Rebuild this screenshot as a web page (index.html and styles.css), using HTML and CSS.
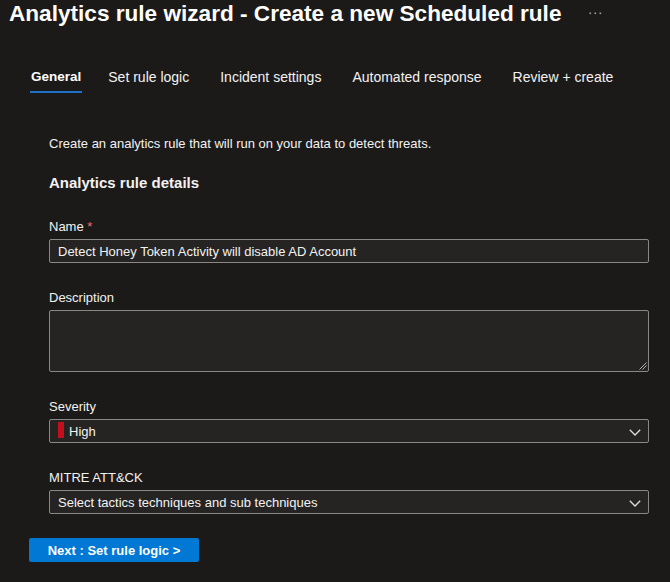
FILE: index.html
```html
<!DOCTYPE html>
<html lang="en">
<head>
<meta charset="utf-8">
<title>Analytics rule wizard</title>
<link rel="stylesheet" href="styles.css">
</head>
<body>
<header class="header">
  <h1 class="title">Analytics rule wizard - Create a new Scheduled rule</h1>
  <svg class="more" width="13" height="3" viewBox="0 0 13 3" aria-label="More">
    <rect x="0.5" y="0.5" width="1.6" height="1.6" fill="#a19f9d"/>
    <rect x="5.5" y="0.5" width="1.6" height="1.6" fill="#a19f9d"/>
    <rect x="10.5" y="0.5" width="1.6" height="1.6" fill="#a19f9d"/>
  </svg>
</header>

<nav class="tabs">
  <span class="tab active">General</span>
  <span class="tab">Set rule logic</span>
  <span class="tab">Incident settings</span>
  <span class="tab">Automated response</span>
  <span class="tab">Review + create</span>
</nav>

<p class="intro">Create an analytics rule that will run on your data to detect threats.</p>

<section class="form">
  <h2 class="section-title">Analytics rule details</h2>

  <div class="field first">
    <div class="label">Name <span class="req">*</span></div>
    <div class="box">Detect Honey Token Activity will disable AD Account</div>
  </div>

  <div class="field">
    <div class="label">Description</div>
    <div class="box area">
      <svg class="resizer" width="8" height="8" viewBox="0 0 8 8">
        <line x1="7.5" y1="0.5" x2="0.5" y2="7.5" stroke="#b3b0ad" stroke-width="1"/>
        <line x1="7.5" y1="3.5" x2="3.5" y2="7.5" stroke="#b3b0ad" stroke-width="1"/>
      </svg>
    </div>
  </div>

  <div class="field">
    <div class="label">Severity</div>
    <div class="box select">
      <span class="sev-bar"></span>
      <span class="value">High</span>
      <svg class="chevron" width="12" height="7" viewBox="0 0 12 7">
        <polyline points="0.8,0.8 6,6 11.2,0.8" fill="none" stroke="#e1dfdd" stroke-width="1.3"/>
      </svg>
    </div>
  </div>

  <div class="field">
    <div class="label">MITRE ATT&amp;CK</div>
    <div class="box select">
      <span class="value">Select tactics techniques and sub techniques</span>
      <svg class="chevron" width="12" height="7" viewBox="0 0 12 7">
        <polyline points="0.8,0.8 6,6 11.2,0.8" fill="none" stroke="#e1dfdd" stroke-width="1.3"/>
      </svg>
    </div>
  </div>
</section>

<footer class="footer">
  <button class="primary" type="button">Next : Set rule logic &gt;</button>
</footer>
</body>
</html>
```

FILE: styles.css
```css
html, body {
  margin: 0;
  padding: 0;
}

body {
  background: #1b1a19;
  color: #f3f2f1;
  font-family: "Liberation Sans", Arial, sans-serif;
  font-size: 13px;
  min-height: 100vh;
}

.header {
  display: flex;
  align-items: flex-start;
  padding-left: 9px;
}

.title {
  margin: 0;
  font-size: 22.6px;
  line-height: 28px;
  font-weight: 700;
  color: #ffffff;
  white-space: nowrap;
}

.more {
  margin-left: 28px;
  margin-top: 12px;
  flex: none;
}

.tabs {
  display: flex;
  margin-top: 39px;
  padding-left: 30px;
}

.tab {
  font-size: 14px;
  line-height: 20px;
  padding-bottom: 4px;
  border-bottom: 2px solid transparent;
  margin-right: 31px;
  color: #f3f2f1;
  white-space: nowrap;
}

.tab.active {
  font-size: 13.5px;
  font-weight: 700;
  padding: 0 1px 4px;
  margin-right: 26px;
  border-bottom-color: #1b72c8;
  color: #ffffff;
}

.intro {
  margin: 42px 0 0;
  padding-left: 49px;
  line-height: 18px;
}

.form {
  padding: 0 21px 0 49px;
}

.section-title {
  margin: 20px 0 0;
  font-size: 15px;
  line-height: 20px;
  font-weight: 700;
}

.field {
  margin-top: 26px;
}

.field.first {
  margin-top: 25px;
}

.label {
  line-height: 18px;
  margin-bottom: 3px;
}

.req {
  color: #e8707a;
}

.box {
  box-sizing: border-box;
  height: 24px;
  border: 1px solid #8a8886;
  border-radius: 2px;
  background: #252423;
  padding: 2px 8px 0;
  line-height: 20px;
  display: flex;
  align-items: center;
  white-space: nowrap;
}

.box.area {
  height: 62px;
  position: relative;
}

.resizer {
  position: absolute;
  right: 1px;
  bottom: 1px;
}

.select {
  padding-right: 7px;
}

.sev-bar {
  align-self: flex-start;
  width: 6px;
  height: 16px;
  background: #c50f1f;
  margin-right: 5px;
  flex: none;
}

.chevron {
  margin-left: auto;
  flex: none;
}

.footer {
  padding-left: 29px;
  margin-top: 24px;
}

.primary {
  box-sizing: border-box;
  width: 170px;
  height: 24px;
  padding: 2px 0 0;
  border: none;
  border-radius: 2px;
  background: #0078d4;
  color: #ffffff;
  font-family: "Liberation Sans", Arial, sans-serif;
  font-size: 13px;
  font-weight: 700;
  line-height: 22px;
  text-align: center;
  display: block;
}
```
